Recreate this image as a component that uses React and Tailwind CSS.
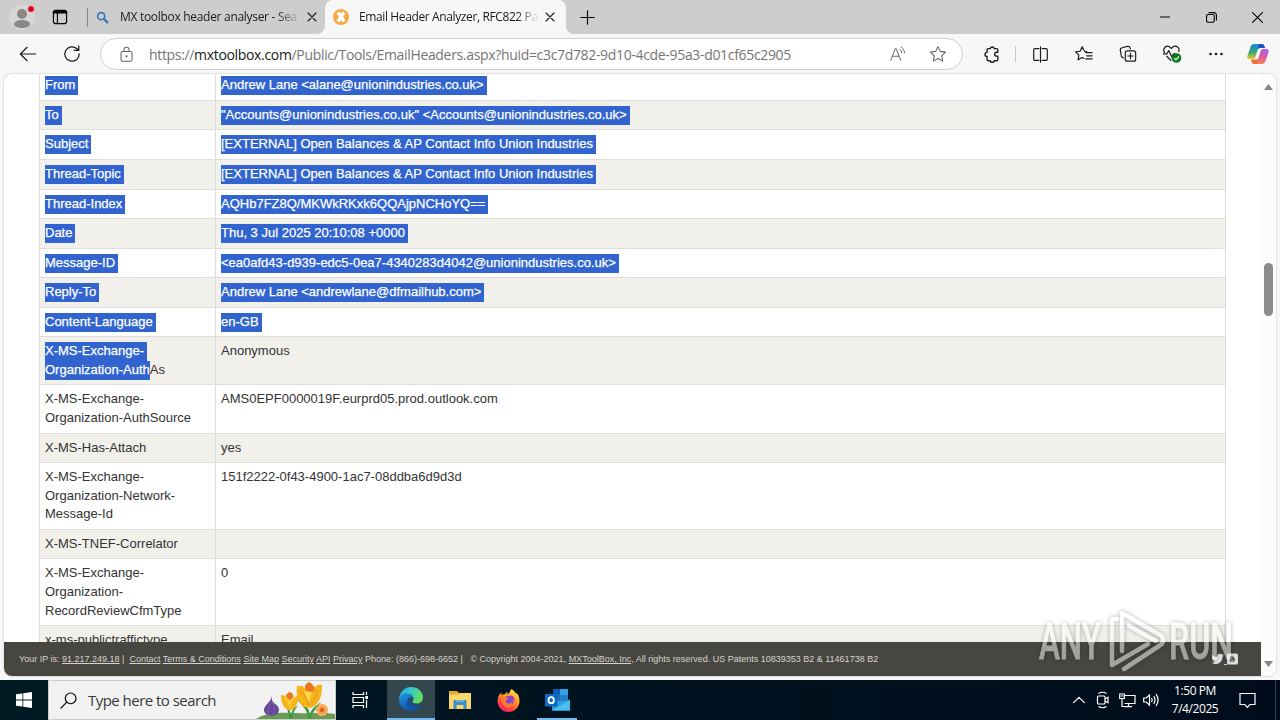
import React from "react";

/* ================= HEADER DATA ================= */
const headers = [
  { name: ["From"], value: "Andrew Lane <alane@unionindustries.co.uk>", selected: true },
  { name: ["To"], value: '"Accounts@unionindustries.co.uk" <Accounts@unionindustries.co.uk>', selected: true },
  { name: ["Subject"], value: "[EXTERNAL] Open Balances & AP Contact Info Union Industries", selected: true },
  { name: ["Thread-Topic"], value: "[EXTERNAL] Open Balances & AP Contact Info Union Industries", selected: true },
  { name: ["Thread-Index"], value: "AQHb7FZ8Q/MKWkRKxk6QQAjpNCHoYQ==", selected: true },
  { name: ["Date"], value: "Thu, 3 Jul 2025 20:10:08 +0000", selected: true },
  { name: ["Message-ID"], value: "<ea0afd43-d939-edc5-0ea7-4340283d4042@unionindustries.co.uk>", selected: true },
  { name: ["Reply-To"], value: "Andrew Lane <andrewlane@dfmailhub.com>", selected: true },
  { name: ["Content-Language"], value: "en-GB", selected: true },
  { name: ["X-MS-Exchange-", "Organization-Auth"], rest: "As", value: "Anonymous" },
  { name: ["X-MS-Exchange-", "Organization-AuthSource"], value: "AMS0EPF0000019F.eurprd05.prod.outlook.com" },
  { name: ["X-MS-Has-Attach"], value: "yes" },
  { name: ["X-MS-Exchange-", "Organization-Network-", "Message-Id"], value: "151f2222-0f43-4900-1ac7-08ddba6d9d3d" },
  { name: ["X-MS-TNEF-Correlator"], value: "" },
  { name: ["X-MS-Exchange-", "Organization-", "RecordReviewCfmType"], value: "0" },
  { name: ["x-ms-publictraffictype"], value: "Email" },
];

const Icon = ({ size = 20, className = "", width = 1.1, children }) => (
  <svg
    width={size}
    height={size}
    viewBox="0 0 20 20"
    fill="none"
    stroke="currentColor"
    strokeWidth={width}
    strokeLinecap="round"
    strokeLinejoin="round"
    className={`shrink-0 ${className}`}
  >
    {children}
  </svg>
);

const Marked = ({ children, tail = true }) => (
  <span
    className={`inline-block h-[19px] bg-[#3164cf] align-top text-white [-webkit-text-stroke:0.25px_white] ${tail ? "pr-[3px]" : ""}`}
  >
    {children}
  </span>
);

/* ================= TAB STRIP ================= */
const TabStrip = () => (
  <div className="flex h-[34px] bg-[#cdcdcd] text-[12px] text-[#1a1a1a]">
    <div className="flex w-[44px] items-center justify-center">
      <svg width="28" height="28" viewBox="0 0 28 28">
        <circle cx="14" cy="14" r="12.5" fill="#d9d7d5" />
        <circle cx="14" cy="11" r="5" fill="#8b8784" />
        <path d="M6 21.5c0-3 3.5-4.5 8-4.5s8 1.500 8 4.500c0 2-4 3.500-8 3.500s-8-1.500-8-3.500z" fill="#8b8784" />
        <circle cx="23" cy="6" r="3.500" fill="#d3081f" stroke="#f3c9cc" strokeWidth="1" />
      </svg>
    </div>
    <div className="flex w-[32px] items-center justify-center">
      <Icon size={16} width={1.5} className="text-black">
        <rect x="1.800" y="1.800" width="16.400" height="16.400" rx="2.500" />
        <path d="M2.500 4h15" strokeWidth="3.200" />
        <path d="M6.800 5v13" />
      </Icon>
    </div>
    <div className="mt-[8px] ml-[11px] h-[19px] w-px bg-[#868686]" />
    <div className="flex w-[238px] items-center">
      <Icon size={13} width={2.6} className="ml-[8px] text-[#3d78b8]">
        <circle cx="8" cy="8" r="5.500" />
        <path d="M12.500 12.500l5 5" strokeWidth="3.500" />
      </Icon>
      <div className="ml-[11px] w-[178px] whitespace-nowrap font-['Open_Sans',sans-serif] tracking-[-0.3px] [mask-image:linear-gradient(to_right,black_155px,transparent_182px)]">
        MX toolbox header analyser - Sea
      </div>
      <Icon size={10} width={2.2} className="ml-[9px]">
        <path d="M2 2l16 16M18 2L2 18" />
      </Icon>
    </div>
    <div className="relative -ml-px flex w-[241px] items-center rounded-t-[8px] bg-[#f7f7f7]">
      <svg width="8" height="8" className="absolute bottom-0 -left-[8px]">
        <path d="M8 0v8H0a8 8 0 0 0 8-8z" fill="#f7f7f7" />
      </svg>
      <svg width="8" height="8" className="absolute -right-[8px] bottom-0">
        <path d="M0 0v8h8a8 8 0 0 1-8-8z" fill="#f7f7f7" />
      </svg>
      <svg width="16" height="16" viewBox="0 0 16 16" className="ml-[8px] shrink-0">
        <circle cx="8" cy="8" r="8" fill="#f8a944" />
        <path d="M5 3.500l6 9M11 3.500l-6 9" stroke="#fff" strokeWidth="3.600" />
      </svg>
      <div className="ml-[10px] w-[179px] whitespace-nowrap font-['Open_Sans',sans-serif] tracking-[-0.38px] [mask-image:linear-gradient(to_right,black_158px,transparent_180px)]">
        Email Header Analyzer, RFC822 Pa
      </div>
      <Icon size={10} width={2.2} className="ml-[7px]">
        <path d="M2 2l16 16M18 2L2 18" />
      </Icon>
    </div>
    <div className="flex w-[42px] items-center justify-center">
      <Icon size={15} width={1.5} className="text-black">
        <path d="M10 1v18M1 10h18" />
      </Icon>
    </div>
    <div className="ml-auto flex text-black">
      <div className="flex w-[46px] items-center justify-center">
        <Icon size={10} width={2}><path d="M0 10h20" /></Icon>
      </div>
      <div className="flex w-[46px] items-center justify-center">
        <Icon size={11} width={2}>
          <rect x="1" y="4.500" width="14" height="14" rx="2.500" />
          <path d="M5.500 1.200h9a4.500 4.500 0 0 1 4.500 4.500v9" />
        </Icon>
      </div>
      <div className="flex w-[46px] items-center justify-center">
        <Icon size={11} width={2}><path d="M1 1l18 18M19 1L1 19" /></Icon>
      </div>
    </div>
  </div>
);

/* ================= ADDRESS BAR ================= */
const Toolbar = () => (
  <div className="flex h-[40px] items-center bg-[#f7f7f7] text-[#1b1b1b]">
    <div className="flex w-[56px] justify-center">
      <Icon size={18} width={1.3}><path d="M18.500 10H1.500M9 2.500L1.500 10 9 17.500" /></Icon>
    </div>
    <div className="flex w-[32px] justify-center">
      <Icon size={18} width={1.4}>
        <path d="M18 10a8 8 0 1 1-2.800-6.100L17.500 6M17.500 1v5h-5" />
      </Icon>
    </div>
    <div className="ml-[12px] flex h-[32px] w-[863px] items-center rounded-full border border-[#cfcfcf] bg-white">
      <Icon size={17} width={1.2} className="ml-[17px] text-[#666]">
        <rect x="3.500" y="6.500" width="13" height="11.500" rx="1.800" />
        <path d="M7 6.500V4.500a3 3 0 0 1 6 0v2" />
        <circle cx="10" cy="12.200" r=".7" fill="currentColor" />
      </Icon>
      <div className="ml-[14px] w-[735px] font-['Open_Sans',sans-serif] text-[14px] tracking-[-0.33px] whitespace-nowrap text-[#757575]">
        https://<span className="text-[#1a1a1a]">mxtoolbox.com</span>/Public/Tools/EmailHeaders.aspx?huid=c3c7d782-9d10-4cde-95a3-d01cf65c2905
      </div>
      <Icon size={18} width={1.1} className="ml-[5px] text-[#666]">
        <path d="M2 17L7 4h1l5 13M3.800 12.500h7.400M12 4.800c1.300.9 2 2.200 2.200 3.900M13.500 2.300c2.200 1.400 3.500 3.600 3.800 6.400" />
      </Icon>
      <Icon size={18} width={1.2} className="ml-[22px] text-[#666]">
        <path d="M10 1.800l2.500 5.300 5.900.8-4.300 4.100 1.100 5.900L10 15.100l-5.200 2.800 1.100-5.900L1.600 7.900l5.900-.8z" />
      </Icon>
    </div>
    <div className="ml-[7px] flex w-[44px] justify-center">
      <Icon size={18} width={1.5}>
        <path d="M8 4a2.300 2.300 0 0 1 4.500 0H15a1.500 1.500 0 0 1 1.500 1.500V8h-1.300a2.200 2.200 0 0 0 0 4.400h1.300V16a1.500 1.500 0 0 1-1.500 1.500h-2.500a2.300 2.300 0 0 1-4.500 0H6A1.500 1.500 0 0 1 4.500 16v-3.200a2.300 2.300 0 0 1 0-4.600V5.500A1.500 1.500 0 0 1 6 4z" />
      </Icon>
    </div>
    <div className="ml-[1px] h-[16px] w-px bg-[#c9c9c9]" />
    <div className="ml-[2px] flex w-[44px] justify-center">
      <Icon size={17} width={1.4}>
        <path d="M8 3H3.500A1.500 1.500 0 0 0 2 4.500v11A1.500 1.500 0 0 0 3.500 17H8M12 3h4.500A1.500 1.500 0 0 1 18 4.500v11a1.500 1.500 0 0 1-1.500 1.500H12M10 1v18" />
      </Icon>
    </div>
    <div className="flex w-[44px] justify-center">
      <Icon size={18} width={1.3}>
        <path d="M13 7.200l-2.600-.3L8 2 5.600 6.900l-5 .7 3.700 3.600-.9 5.300L8 14l2 1M12 8.500h7M13 12h6M12 15.500h7" />
      </Icon>
    </div>
    <div className="flex w-[44px] justify-center">
      <Icon size={18} width={1.3}>
        <rect x="7" y="6.500" width="11.500" height="11.500" rx="2.300" />
        <path d="M12.750 9.200v6M9.750 12.200h6M5 14.500l-.7-.3a3 3 0 0 1-1.700-2L1.500 6.300a2.800 2.800 0 0 1 2-3.300l5.700-1.400a2.800 2.800 0 0 1 3.300 2l.1.800" />
      </Icon>
    </div>
    <div className="flex w-[44px] justify-center">
      <svg width="20" height="20" viewBox="0 0 20 20" fill="none" stroke="currentColor" strokeWidth="1.200" strokeLinejoin="round">
        <path d="M2.500 9C0 4 4.500.500 8 3.200l1.300 1.300 1.200-1.300C14 .500 18.500 4 16.500 8M4.500 12l4.800 4.700M1 9.800h4l1.800-3.300 3 6.500 1.700-3.200h2" />
        <circle cx="14.500" cy="14" r="4.800" fill="#0f7b1c" stroke="none" />
        <path d="M12.200 14.200l1.700 1.600 3-3.300" stroke="#dff2df" />
      </svg>
    </div>
    <div className="flex w-[44px] justify-center">
      <svg width="16" height="4" fill="currentColor">
        <circle cx="2.500" cy="2" r="1.300" /><circle cx="8" cy="2" r="1.300" /><circle cx="13.500" cy="2" r="1.300" />
      </svg>
    </div>
    <svg width="22" height="20" viewBox="0 0 22 20" className="ml-[9px] shrink-0">
      <defs>
        <linearGradient id="cpA" x1="0" y1="0" x2="0" y2="1">
          <stop offset="0" stopColor="#1683dd" /><stop offset=".55" stopColor="#34a878" /><stop offset="1" stopColor="#f3c526" />
        </linearGradient>
        <linearGradient id="cpB" x1="0.500" y1="0" x2="0.300" y2="1">
          <stop offset="0" stopColor="#a564e6" /><stop offset=".5" stopColor="#e8599d" /><stop offset="1" stopColor="#f58b4e" />
        </linearGradient>
      </defs>
      <path d="M15 0H7Q4.500 0 3.500 3L.5 11.500Q-.5 15 3 15h3.500Q8 15 8.600 12.500l2-7Q11.300 4 13 4h5l-.8-2.300Q16.600 0 15 0z" fill="url(#cpA)" />
      <path d="M12 0h3q1.500 0 2.200 1.800L18 4h-5q-1.600 0-2.400 1.600z" fill="#1c53b9" />
      <path d="M7 20h8q2.500 0 3.500-3l3-8.500Q22.500 5 19 5h-3.500Q14 5 13.400 7.500l-2 7Q10.700 16 9 16H4l.8 2.300Q5.400 20 7 20z" fill="url(#cpB)" />
      <path d="M4 15.500h5q1.500 0 2.400-1.500L9.500 20H7q-1.600 0-2.200-1.700z" fill="#ef6a37" />
    </svg>
  </div>
);

/* ================= PAGE ================= */
const HeaderTable = () => (
  <div className="-mt-[3.74px] ml-[35px] w-[1187px] border-x border-[#dddddd] text-[13px] leading-[18.57px] text-[#333]">
    {headers.map((row, i) => (
      <div
        key={i}
        className={`flex border-t border-[#dddddd] ${i % 2 ? "bg-[#f1f0eb]" : "bg-white"}`}
      >
        <div className="w-[176px] shrink-0 border-r border-[#dddddd] p-[5px]">
          {row.name.map((line, n) => (
            <div key={n} className="h-[18.57px] whitespace-nowrap">
              {row.selected || row.rest ? (
                <Marked tail={!(row.rest && n === 1)}>{line}</Marked>
              ) : (
                line
              )}
              {n === row.name.length - 1 && row.rest}
            </div>
          ))}
        </div>
        <div className="h-[28.57px] p-[5px] whitespace-nowrap">
          {row.selected ? <Marked>{row.value}</Marked> : row.value}
        </div>
      </div>
    ))}
  </div>
);

const PageFooter = () => (
  <div className="absolute bottom-0 left-0 flex h-[34px] w-[1257px] items-center bg-[#484640] pl-[15px] text-[9px] whitespace-pre text-[#d4d3d0]">
    <div className="pt-px">
      Your IP is: <u>91.217.249.18</u> |{"  "}<u>Contact</u> <u>Terms &amp; Conditions</u> <u>Site Map</u> <u>Security</u> <u>API</u> <u>Privacy</u> Phone: (866)-698-6652 |{"   "}© Copyright 2004-2021, <u>MXToolBox, Inc</u>, All rights reserved. US Patents 10839353 B2 &amp; 11461738 B2
    </div>
    <svg width="28" height="12" viewBox="0 0 28 12" className="ml-auto mr-[22px]">
      <path d="M1 1.500c1.500 1.800 3 2.500 5 2.600C5.700 1.800 7.300.5 9 .8c.8.100 1.300.6 1.700.8L12.500 1l-1 1.700 1.200-.2-1.300 1.500C11.300 8.500 8 11 4.500 11 2.800 11 1.500 10.500.5 9.800c1.500.1 2.700-.3 3.600-1-1.300-.2-2-.9-2.400-1.800h1.100C1.500 6.500.8 5.500.8 4.200l1.100.3C.9 3.700.6 2.700 1 1.500z" fill="#e2e2e4" />
      <path d="M13 11.500h3" stroke="#d4d3d0" />
      <rect x="16" y=".5" width="11" height="11" rx="1.500" fill="#dedede" />
      <path d="M19 3h2.800a1.500 1.500 0 0 1 1.500 1.500c0 .8.800.6.800 1.300v1.500A1.800 1.800 0 0 1 22.300 9H19.500A1.500 1.500 0 0 1 18.500 7.500v-3A1.500 1.500 0 0 1 19 3zM20 4.800h1.500M20 7.200h2.500" fill="#484640" stroke="#dedede" strokeWidth=".9" />
    </svg>
  </div>
);

const Scrollbar = () => (
  <div className="flex w-[15px] flex-col items-center bg-[#fcfcfc]">
    <svg width="9" height="6" className="mt-[10px]"><path d="M0 6L4.500 0 9 6z" fill="#858585" /></svg>
    <div className="mt-[173px] h-[53px] w-[9px] rounded-full bg-[#8b8b8b]" />
    <svg width="9" height="6" className="mt-auto mb-[9px]"><path d="M0 0h9L4.500 6z" fill="#858585" /></svg>
  </div>
);

/* ================= TASKBAR ================= */
const Flowers = () => (
  <svg width="80" height="38" viewBox="0 0 80 38" className="self-end">
    <path d="M1 38c8-6 24-7 40-6s28-1 39 1v5z" fill="#6b9b52" />
    <path d="M17 14c-1 4 0 6 2 8 5 3 6 7 4 10s-10 4-13 0 1-8 4-11c2-2 2-4 3-7z" fill="#67479a" />
    <path d="M17 21c-4 5-5 8-3 13M17 21c3 4 4 8 1 13" stroke="#7d5fb0" fill="none" />
    <path d="M34 38c0-9-3-12-5-14 5 1 6 6 7 10 1-5 3-8 7-9-4 4-5 8-6 13zM53 38c0-10-8-15-11-20 8 4 12 10 13 15 2-7 8-9 11-12-3 6-9 9-10 17z" fill="#3e9943" />
    <path d="M26 14c4 0 5 2 7 4 0-3 2-6 4-6 2 2 2 4 2 6 2-3 3-4 5-4-1 8-3 15-9 15s-9-7-9-15z" fill="#f7b51b" />
    <path d="M29 18c4 2 5 6 6 10 1-5 2-8 5-12l-5-4-3 1z" fill="#fbcd35" />
    <path d="M31 14l3-3 3 1 1 4-3 3-3-2z" fill="#ec7623" />
    <path d="M42 5c5-1 7 1 8 3 0-4 1-6 4-7 3 2 4 4 4 7 2-3 5-5 9-4 1 12-5 23-13 23S40 17 42 5z" fill="#f7b51b" />
    <path d="M44 10c6 2 8 8 9 14 1-7 3-12 8-15M54 24c5-4 8-9 9-15" stroke="#e79a1b" strokeWidth="1.200" fill="none" />
    <path d="M49 12c2 2 4 6 5 11 0-5 2-9 4-11l-4-3z" fill="#ffd749" />
    <path d="M50 5l4-4 3 2 3 4-3 4-6-1z" fill="#ee7620" />
    <circle cx="67" cy="29" r="6" fill="#f5a04b" />
    <circle cx="67" cy="29" r="5" fill="none" stroke="#f9bf78" strokeWidth="2" strokeDasharray="2 2" />
    <circle cx="67" cy="29" r="2.300" fill="#d8641f" />
  </svg>
);

const EdgeLogo = () => (
  <svg width="24" height="24" viewBox="0 0 24 24">
    <defs>
      <linearGradient id="edgeTop" x1="0" y1="0" x2="1" y2=".3">
        <stop offset="0" stopColor="#2a9fe0" /><stop offset=".5" stopColor="#36c6cf" /><stop offset="1" stopColor="#63dd62" />
      </linearGradient>
      <linearGradient id="edgeSide" x1="0" y1="0" x2=".4" y2="1">
        <stop offset="0" stopColor="#2196e0" /><stop offset="1" stopColor="#0d59b0" />
      </linearGradient>
    </defs>
    <path d="M0 12C1 4 6 0 12 0c7 0 12 5 12 10.500 0 4-3 6-6.500 6-3 0-4-1-4-2 0-.8 1-1.200 1-3C14.500 9 12 7 9 7c-4 0-7 2-9 5z" fill="url(#edgeTop)" />
    <path d="M0 12C1 8.500 4 6.500 8 6.500c3.500 0 6 1.800 6.500 4.500C11 9.500 8 12 8 15.500c0 4 3 7.500 6 8.200C6 25 0 19.500 0 12z" fill="url(#edgeSide)" />
    <path d="M8 15.500c0-2.500 1-4.500 2.500-5.500-.5 4 2.500 8.500 7.500 8.500 2 0 3-.6 4-1 .5-.1.800.3.500.8C20 22.500 16.500 24 13.500 23.800 10 23 8 19.500 8 15.500z" fill="#174f9c" />
  </svg>
);

const Taskbar = () => (
  <div className="flex h-[40px] bg-gradient-to-r from-[#001a24] to-[#000c1b] text-white">
    <div className="flex w-[48px] items-center justify-center">
      <svg width="16" height="16" viewBox="0 0 16 16" fill="#fff">
        <path d="M0 2.300L6.500 1.400v6.200H0zM7.300 1.300L16 0v7.600H7.300zM0 8.400h6.500v6.200L0 13.700zM7.300 8.400H16V16l-8.700-1.300z" />
      </svg>
    </div>
    <div className="flex w-[288px] items-center border border-[#c9cccd] bg-[#f2f2f2] text-[#333]">
      <Icon size={17} width={1.4} className="ml-[11px] text-black">
        <circle cx="12.500" cy="7.500" r="6.300" />
        <path d="M8 12L1 19" />
      </Icon>
      <div className="ml-[11px] flex-1 font-['Open_Sans',sans-serif] text-[15px] tracking-[-0.53px] whitespace-nowrap text-[#383838]">
        Type here to search
      </div>
      <Flowers />
    </div>
    <div className="flex w-[48px] items-center justify-center">
      <svg width="17" height="16" viewBox="0 0 17 16" fill="none" stroke="#fff" strokeWidth="1.200">
        <path d="M1 0v2.500h10.500V0M1 16v-2.500h10.500V16M1 5.500h10.500v5H1zM14.500 0v3M14.500 8v8" />
        <path d="M13.300 4h2.700v3h-2.700z" fill="#fff" stroke="none" />
      </svg>
    </div>
    <div className="ml-[3px] flex w-[48px] items-center justify-center border-b-2 border-[#76b9ed] bg-[#33474f]">
      <EdgeLogo />
    </div>
    <div className="flex w-[49px] items-center justify-center">
      <svg width="22" height="20" viewBox="0 0 22 20">
        <path d="M0 1h8l2 2h12v16H0z" fill="#e9a72b" />
        <path d="M0 4.500h9l2-1.500h11v16H0z" fill="#fbd76b" />
        <path d="M4.500 19v-7.500q0-1.500 1.500-1.500h10q1.500 0 1.500 1.500V19h-3v-4h-7v4z" fill="#3f8dc9" />
        <path d="M7 10h8v2H7z" fill="#65aedc" />
      </svg>
    </div>
    <div className="flex w-[49px] items-center justify-center">
      <svg width="23" height="23" viewBox="0 0 24 24">
        <defs>
          <linearGradient id="fox" x1=".8" y1="0" x2=".25" y2="1">
            <stop offset="0" stopColor="#fff04b" /><stop offset=".4" stopColor="#ff9a22" /><stop offset=".75" stopColor="#ff4142" /><stop offset="1" stopColor="#ef1f73" />
          </linearGradient>
        </defs>
        <path d="M4.500 3.500c-.2 1.200 0 2 .4 2.800C6 5.500 7 5.500 8 5.600 9 4.200 10 3.500 11.500 3.200c-.6.900-.8 1.700-.5 2.400 1.500-.4 2.500-2.500 3.800-5.600 4 2 4.500 4.500 5.300 5.500.3-.7.200-1.500 0-2 2.200 2.500 3.400 5.500 3.400 9C23.500 19 18.500 24 12 24S.5 19 .5 12.500c0-3.500 1.500-7 4-9z" fill="url(#fox)" />
        <circle cx="12" cy="12.500" r="5.200" fill="#7746d6" />
        <path d="M5 9c3-1.500 5 0 7 .5 0 1.500-2.500 1.500-3 3-.3 1.500 1.500 3 3.500 2.500 2-.5 3-1 3.500-.5C16 17 14 19.500 11 19.500 7 19 4 14 5 9z" fill="#ff7a30" />
        <path d="M13 7c4-1 6 3 5.500 6.500-.5-2-2-3.500-4-4z" fill="#b63bb9" />
      </svg>
    </div>
    <div className="flex w-[48px] flex-col items-center">
      <svg width="25" height="22" viewBox="0 0 25 22" className="mt-[9px]">
        <path d="M8 0h15v12H8z" fill="#1f6fc0" />
        <path d="M8 0h7v6H8z" fill="#0d5fb4" />
        <path d="M15 0h8v6h-8z" fill="#32a4e3" />
        <path d="M15 6h8v6h-8z" fill="#2480cd" />
        <path d="M7 12h16l2-2v11.500H7z" fill="#2b9fe0" />
        <path d="M7 21.500l18-11v11z" fill="#4cbdf0" />
        <path d="M0 5h12.500v12.500H0z" fill="#0b6bc4" />
        <ellipse cx="6.200" cy="11.200" rx="2.700" ry="3" fill="none" stroke="#fff" strokeWidth="1.800" />
      </svg>
      <div className="mt-auto h-[2px] w-[40px] bg-[#76b9ed]" />
    </div>

    <div className="ml-auto flex items-center">
      <div className="flex w-[24px] justify-center">
        <Icon size={12} width={2}><path d="M1 14.500l9-9 9 9" /></Icon>
      </div>
      <div className="flex w-[24px] justify-center">
        <svg width="14" height="18" viewBox="0 0 14 18" fill="none" stroke="#fff" strokeWidth="1.200">
          <rect x="1.500" y="5" width="7.500" height="8" rx="1" />
          <path d="M9 8l3-1.700v5.400L9 10M2.500 2.500Q6.500 0 10.500 2.500M2.500 15.500q4 2.500 8 0" />
        </svg>
      </div>
      <div className="flex w-[24px] justify-center">
        <svg width="17" height="15" viewBox="0 0 17 15" fill="none" stroke="#fff" strokeWidth="1.200">
          <path d="M5.500 2.500h10.500v8H5.500M9.500 10.500v3M5.500 13.700H13M.7 1h4.600v4.500H.7zM3 5.500v8h2.500M1.800 3h2.500" />
        </svg>
      </div>
      <div className="flex w-[24px] justify-center">
        <svg width="17" height="14" viewBox="0 0 17 14" fill="none" stroke="#fff" strokeWidth="1.200">
          <path d="M.7 5h2.500L6.500 2v10.200L3.200 9H.7zM8.500 5q1.300 2 0 4M10.700 3.200q2.700 3.800 0 7.600M13 1.200q4.200 5.800 0 11.600" />
        </svg>
      </div>
      <div className="w-[64px] text-center font-['Open_Sans',sans-serif] text-[12px] leading-[18px] tracking-[-0.42px]">
        <div>1:50 PM</div>
        <div>7/4/2025</div>
      </div>
      <div className="flex w-[40px] justify-center">
        <svg width="17" height="17" viewBox="0 0 17 17" fill="none" stroke="#fff" strokeWidth="1.200">
          <path d="M1 1.500h15v11h-5.200L8.300 15.300 5.800 12.500H1z" />
        </svg>
      </div>
      <div className="mr-[4px] ml-[8px] h-[40px] w-px bg-[#3b4552]" />
    </div>
  </div>
);

/* ================= WATERMARK ================= */
const Watermark = () => (
  <svg width="204" height="76" viewBox="0 0 204 76" className="absolute top-[602px] left-[1034px] opacity-50 [filter:drop-shadow(0_0_2px_rgba(0,0,0,0.6))]">
    <g fill="#fff" stroke="#fff" strokeWidth=".8" fontFamily="Roboto, sans-serif" fontSize="50" fontWeight="500">
      <text x="5" y="57" textLength="62" lengthAdjust="spacingAndGlyphs">ANY</text>
      <text x="135" y="57" textLength="64" lengthAdjust="spacingAndGlyphs">RUN</text>
    </g>
    <g fill="none" stroke="#fff" strokeWidth="4.500" strokeLinejoin="round" strokeLinecap="round">
      <path d="M88 49V11l40 23" />
      <path d="M83 17h-5v46l36-21" />
      <path d="M95 24l27 15M128 34q3 7-3 10L90 67" />
    </g>
  </svg>
);

const App = () => {
  return (
    <div className="relative flex h-[720px] w-[1280px] flex-col overflow-hidden bg-[#f7f7f7] font-['Liberation_Sans',Arial,sans-serif]">
      <TabStrip />
      <Toolbar />
      <main className="relative mx-[4px] mb-[4px] flex h-[602px] overflow-hidden rounded-[8px] bg-white shadow-[0_0_2px_rgba(0,0,0,0.3)]">
        <div className="w-[1257px] overflow-hidden">
          <HeaderTable />
        </div>
        <PageFooter />
        <Scrollbar />
      </main>
      <Taskbar />
      <Watermark />
    </div>
  );
};

export default App;
